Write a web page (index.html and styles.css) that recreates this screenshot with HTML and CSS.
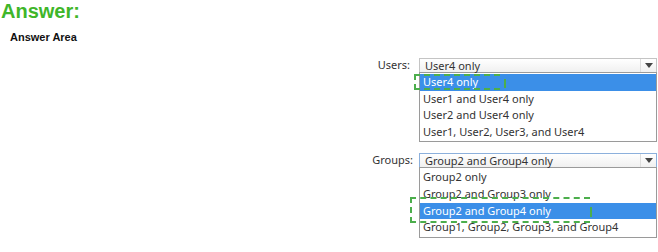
FILE: index.html
```html
<!DOCTYPE html>
<html lang="en">
<head>
  <meta charset="UTF-8" />
  <title>Answer</title>
  <link rel="stylesheet" href="styles.css">
</head>
<body>
  <h1 class="answer-title">Answer:</h1>
  <h2 class="area-title">Answer Area</h2>

  <div class="form">
    <div class="field users">
      <span class="label">Users:</span>
      <div class="dropdown">
        <div class="select">
          <span>User4 only</span>
          <span class="arrow"></span>
        </div>
        <ul class="options">
          <li class="selected">User4 only
            <span class="mark mark-users"></span>
            <span class="tick tick-users"></span>
          </li>
          <li>User1 and User4 only</li>
          <li>User2 and User4 only</li>
          <li>User1, User2, User3, and User4</li>
        </ul>
      </div>
    </div>

    <div class="field groups">
      <span class="label">Groups:</span>
      <div class="dropdown">
        <div class="select focused">
          <span>Group2 and Group4 only</span>
          <span class="arrow"></span>
        </div>
        <ul class="options">
          <li>Group2 only</li>
          <li>Group2 and Group3 only</li>
          <li class="selected">Group2 and Group4 only
            <span class="mark mark-groups"></span>
            <span class="tick tick-groups"></span>
          </li>
          <li>Group1, Group2, Group3, and Group4</li>
        </ul>
      </div>
    </div>
  </div>
</body>
</html>
```

FILE: styles.css
```css
* {
  margin: 0;
  padding: 0;
  box-sizing: border-box;
}

body {
  font-family: 'Liberation Sans', Arial, sans-serif;
  background-color: #fff;
  color: #222;
  width: 658px;
  height: 252px;
  overflow: hidden;
}

.answer-title {
  font-size: 20px;
  line-height: 22px;
  font-weight: bold;
  color: #3fb62a;
  margin-left: 1px;
}

.area-title {
  font-size: 11px;
  line-height: 14px;
  font-weight: bold;
  color: #111;
  margin: 8px 0 0 10px;
}

.form {
  display: flex;
  flex-direction: column;
  gap: 11px;
  padding-left: 370px;
  margin-top: 14px;
}

.field {
  display: flex;
  align-items: flex-start;
}

.label {
  width: 49px;
  padding-right: 9px;
  text-align: right;
  font-family: 'Noto Sans', sans-serif;
  font-size: 11px;
  line-height: 14px;
  color: #333;
}

.groups .label {
  padding-right: 6px;
}

.dropdown {
  width: 238px;
  font-family: 'Noto Sans', sans-serif;
  font-size: 11px;
  color: #333;
}

.select {
  display: flex;
  justify-content: space-between;
  height: 14px;
  border: 1px solid #c4c4c4;
  border-bottom: none;
  line-height: 13px;
  padding-left: 5px;
  background: linear-gradient(#fff, #f0f0f0);
}

.select.focused {
  border-color: #8cb0dc;
  border-bottom: none;
}

.arrow {
  width: 16px;
  border-left: 1px solid #ddd;
  position: relative;
}

.arrow::after {
  content: "";
  position: absolute;
  left: 4px;
  top: 4px;
  border-left: 4px solid transparent;
  border-right: 4px solid transparent;
  border-top: 5px solid #444;
}

.options {
  list-style: none;
  border: 1px solid #9a9a9a;
  padding: 1px 0;
}

.options li {
  position: relative;
  height: 16.6px;
  line-height: 16px;
  padding-left: 3px;
}

.options li.selected {
  background-color: #3b8fe8;
  color: #fff;
}

.mark {
  position: absolute;
  border: 2px dashed #4cae4c;
  border-right: none;
}

.mark-users {
  left: -6px;
  top: 0;
  width: 86px;
  height: 16px;
}

.mark-groups {
  left: -10px;
  top: -6px;
  width: 180px;
  height: 26px;
}

.tick {
  position: absolute;
  width: 2px;
  background-color: #4cae4c;
}

.tick-users {
  left: 84px;
  top: 5px;
  height: 9px;
}

.tick-groups {
  left: 170px;
  top: 4px;
  height: 10px;
}
```
